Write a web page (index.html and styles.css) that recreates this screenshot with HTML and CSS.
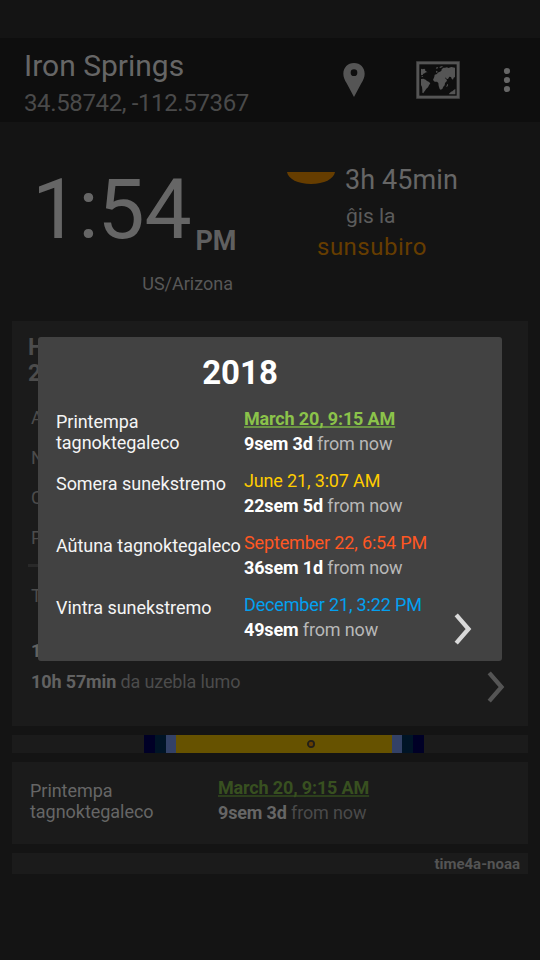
FILE: index.html
```html
<!DOCTYPE html>
<html lang="eo">
<head>
<meta charset="utf-8">
<title>Iron Springs</title>
<link rel="stylesheet" href="styles.css">
</head>
<body>
<header class="bar">
  <div class="place">
    <div class="name">Iron Springs</div>
    <div class="coords">34.58742, -112.57367</div>
  </div>
  <svg class="pin" width="22" height="34" viewBox="0 0 66 102"><path fill-rule="evenodd" d="M33 0C14 0 1 14 1 32c0 11 4 18 10 29l22 41 22-41c6-11 10-18 10-29C65 14 52 0 33 0zM33 19a10 10 0 1 1 0 20 10 10 0 0 1 0-20z"/></svg>
  <svg class="map" width="44" height="38" viewBox="0 0 132 114">
    <rect class="rim" x="0" y="0" width="132" height="114"/>
    <rect class="frame" x="6" y="6" width="120" height="102"/>
    <path d="M15 24l3-1 2 2 5-2 3 3-1 4 2-1 3 3 3 2-5 0-4 3-4 1-2 4-3 1-2-2zM16 45l4 1 2 2-4 0zM15 54l7-1 7 3 4 4 5 2 5 5-4 6-3 6-5 4-4 6-3 4-2 4-3-2 0-8-1-9-3-6zM55 47l1-6 7-2 2-4 5-2 6-3 1-5 5-5 5 0 6-1 4 2 9-3 11 2v28l-4 2-2 6-4-3-2-5-5-1-4 7-4 0-2-4-3 0 2 3 4 4-1 4-5 5-1 7-4 4-3 7-5 2-3-2-3-9-1-9-4-4-7 0-5-5zM60 31l3-2 2 4-4 3zM59 21l5-3 3 3-5 2zM70 18l9-3 1 3-8 3zM93 71l3-3 0 5-3 5-2-1zM99 98l6-6 4-1 5-5 4-2v16H100z"/>
  </svg>
  <svg class="dots" width="8" height="26" viewBox="0 0 8 26"><circle cx="4" cy="4" r="3.1"/><circle cx="4" cy="13" r="3.1"/><circle cx="4" cy="22" r="3.1"/></svg>
</header>

<section class="now">
  <div class="clock">
    <div class="time"><span>1</span><span class="colon">:</span><span class="minutes">54</span><span class="pm">PM</span></div>
    <div class="zone">US/Arizona</div>
  </div>
  <div class="next">
    <div class="remain"><svg width="48" height="12" viewBox="0 0 48 12"><path d="M0 0H48C47 7 37 12 24 12S1 7 0 0z"/></svg><span>3h 45min</span></div>
    <div class="until">ĝis la</div>
    <div class="event">sunsubiro</div>
  </div>
</section>

<main class="cards">
  <section class="card today">
    <h2>H<br>2</h2>
    <ul><li>A</li><li>N</li><li>C</li><li>P</li></ul>
    <hr>
    <div class="total">T</div>
    <div class="length"><b>1</b></div>
    <div class="light"><b>10h 57min</b> da uzebla lumo</div>
    <svg class="arrow" width="18" height="32" viewBox="0 0 18 32"><path d="M2.2 1.8L14.5 16 2.2 30.2"/></svg>
  </section>
  <section class="card strip">
    <i class="astro"></i><i class="naut"></i><i class="civil"></i><i class="day"><svg width="10" height="10" viewBox="0 0 10 10"><circle cx="5" cy="5" r="3.1"/></svg></i><i class="civil"></i><i class="naut"></i><i class="astro"></i>
  </section>
  <section class="card season">
    <div class="row">
      <div class="label">Printempa tagnoktegaleco</div>
      <div class="when"><div class="date spring">March 20, 9:15 AM</div><div class="away"><b>9sem 3d</b> from now</div></div>
    </div>
  </section>
  <footer class="card source">time4a-noaa</footer>
</main>

<div class="dialog">
  <h1>2018</h1>
  <div class="row">
    <div class="label">Printempa tagnoktegaleco</div>
    <div class="when"><div class="date spring">March 20, 9:15 AM</div><div class="away"><b>9sem 3d</b> from now</div></div>
  </div>
  <div class="row">
    <div class="label">Somera sunekstremo</div>
    <div class="when"><div class="date summer">June 21, 3:07 AM</div><div class="away"><b>22sem 5d</b> from now</div></div>
  </div>
  <div class="row">
    <div class="label">Aŭtuna tagnoktegaleco</div>
    <div class="when"><div class="date autumn">September 22, 6:54 PM</div><div class="away"><b>36sem 1d</b> from now</div></div>
  </div>
  <div class="row">
    <div class="label">Vintra sunekstremo</div>
    <div class="when"><div class="date winter">December 21, 3:22 PM</div><div class="away"><b>49sem</b> from now</div></div>
  </div>
  <svg class="arrow" width="18" height="32" viewBox="0 0 18 32"><path d="M2.2 1.8L14.5 16 2.2 30.2"/></svg>
</div>
</body>
</html>
```
FILE: styles.css
```css
* { box-sizing: border-box; }
body {
  margin: 0;
  width: 540px;
  height: 960px;
  padding-top: 38px;
  overflow: hidden;
  position: relative;
  background: #141414;
  color: #666;
  font: 18px/21px Roboto, sans-serif;
}
h1, h2, ul { margin: 0; padding: 0; list-style: none; }
b { font-weight: 700; }
svg { display: block; }

.bar {
  display: flex;
  align-items: center;
  height: 84px;
  padding: 0 25px 0 24px;
  background: #0e0e0e;
}
.place { width: 319px; padding-top: 10px; }
.name { font-size: 30px; line-height: 36px; color: #666; }
.coords { font-size: 24px; line-height: 38px; letter-spacing: -.37px; color: #4a4a4a; }
.bar svg { fill: #555; flex: none; }
.map { margin-left: 51px; }
.map .rim { fill: #2f2f2f; }
.map .frame { fill: #0e0e0e; stroke: #555; stroke-width: 8; }
.bar .dots { fill: #666; margin-left: 43px; }

.now { display: flex; height: 199px; }
.clock { width: 287px; padding: 38px 0 0 32px; }
.time { font-size: 84px; line-height: 100px; height: 113px; display: flex; }
.colon { margin: 0 -1px; }
.minutes { letter-spacing: -.3px; }
.pm { font-size: 27px; line-height: 32px; font-weight: 700; margin: 65px 0 0 4px; color: #606060; }
.zone { width: 201px; text-align: right; color: #585858; }
.next { padding-top: 41px; }
.remain { display: flex; gap: 10px; font-size: 27px; line-height: 34px; letter-spacing: .1px; }
.remain svg { margin-top: 9px; fill: #663d00; }
.until { margin: 7px 0 0 59px; font-size: 21px; line-height: 24px; color: #5c5c5c; }
.event { margin: 6px 0 0 30px; font-size: 24px; line-height: 26px; letter-spacing: .5px; color: #663d00; }

.cards { display: flex; flex-direction: column; gap: 9px; padding: 0 12px; }
.card { background: #1b1b1b; }
.today { position: relative; height: 405px; padding: 14px 16px 0; color: #4c4c4c; }
.today h2 { font-size: 23px; line-height: 26px; font-weight: 700; }
.today ul { padding: 12px 3px 0; }
.today li { height: 40px; line-height: 38px; }
.today hr { width: 440px; margin: 5px 0 0; border: 0; height: 3px; background: #292929; }
.total { margin: 18px 3px 0; }
.length { margin: 34px 3px 0; }
.light { margin: 10px 3px 0; letter-spacing: -.13px; }
.today b { color: #626262; }
.arrow { position: absolute; fill: none; stroke-width: 4.3; }
.today .arrow { stroke: #555; left: 475px; top: 350px; }

.strip { display: flex; height: 18px; padding-left: 132px; }
.strip i { width: 11px; }
.strip .astro { background: #000026; }
.strip .naut { background: #001426; }
.strip .civil { width: 10px; background: #334166; }
.strip .day { width: 216px; padding: 4px 0 0 130px; background: #665200; }
.day circle { fill: #663d00; stroke: #222018; stroke-width: 1.8; }

.row { display: flex; height: 50px; }
.label { width: 188px; padding-top: 5px; letter-spacing: -.04px; }
.when { flex: 1; line-height: 25px; white-space: nowrap; letter-spacing: -.15px; }
.season { height: 82px; padding: 13px 18px 0; }
.season .away { color: #4a4a4a; }
.season b { color: #666; }
.season .spring { color: #385020; text-decoration-color: #2c3e1c; }
.spring {
  font-weight: 700;
  text-decoration: underline 2px;
  text-underline-offset: 1px;
  text-decoration-skip-ink: none;
}
.source { height: 21px; padding-right: 8px; text-align: right; font-size: 15px; line-height: 22px; font-weight: 700; color: #545454; }

.dialog {
  position: absolute;
  left: 38px;
  top: 337px;
  width: 464px;
  height: 324px;
  padding: 16px 18px 0;
  border-radius: 3px;
  background: #424242;
  color: #f5f5f5;
}
.dialog h1 { width: 368px; margin-bottom: 13px; font-size: 33px; line-height: 40px; text-align: center; color: #fff; }
.dialog .row + .row { margin-top: 12px; }
.dialog .away { color: #b8b8b8; }
.dialog b { color: #fff; }
.dialog .spring { color: #8bc34a; text-decoration-color: #6b9445; }
.summer { color: #ffcc00; }
.autumn { color: #ff5722; }
.winter { color: #03a0f0; }
.dialog .arrow { stroke: #d9d9d9; left: 415.5px; top: 276px; }
```
